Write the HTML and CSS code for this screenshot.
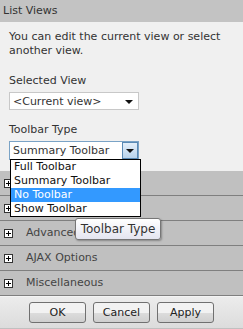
FILE: index.html
```html
<!DOCTYPE html>
<html lang="en">
<head>
    <meta charset="UTF-8">
    <title>List Views</title>
    <link rel="stylesheet" href="styles.css">
</head>
<body>
    <div class="panel">
        <div class="panel-head">List Views</div>
        <div class="panel-body">
            <p class="intro">You can edit the current view or select another view.</p>
            <div class="field-label">Selected View</div>
            <div class="select">
                <span class="select-text">&lt;Current view&gt;</span>
                <span class="arrow"></span>
            </div>
            <div class="field-label">Toolbar Type</div>
            <div class="select open">
                <span class="select-text">Summary Toolbar</span>
                <span class="arrow-btn"><span class="arrow"></span></span>
                <ul class="dropdown">
                    <li>Full Toolbar</li>
                    <li>Summary Toolbar</li>
                    <li class="active">No Toolbar</li>
                    <li>Show Toolbar</li>
                </ul>
            </div>
        </div>
        <div class="sections">
            <div class="section"><span class="plus"></span>Appearance</div>
            <div class="section"><span class="plus"></span>Layout</div>
            <div class="section"><span class="plus"></span>Advanced</div>
            <div class="section"><span class="plus"></span>AJAX Options</div>
            <div class="section"><span class="plus"></span>Miscellaneous</div>
        </div>
        <div class="footer">
            <button type="button">OK</button>
            <button type="button">Cancel</button>
            <button type="button">Apply</button>
        </div>
        <div class="tooltip">Toolbar Type</div>
    </div>
</body>
</html>
```

FILE: styles.css
```css
body {
    margin: 0;
    font-family: 'DejaVu Sans', Verdana, sans-serif;
    font-size: 11px;
    color: #333;
    background-color: #c0c0c0;
}
.panel {
    position: relative;
    width: 243px;
    height: 329px;
    overflow: hidden;
}
.panel-head {
    height: 22px;
    line-height: 21px;
    padding-left: 3px;
    background-color: #c3c3c3;
    color: #333;
}
.panel-body {
    height: 149px;
    box-sizing: border-box;
    padding: 8px 9px 0;
    background-color: #f0f0f0;
}
.intro {
    margin: 0 0 16px;
    line-height: 14px;
    font-size: 11px;
}
.field-label {
    line-height: 14px;
    margin-bottom: 4px;
}
.select {
    position: relative;
    width: 130px;
    height: 18px;
    box-sizing: border-box;
    border: 1px solid #c8c8c8;
    background-color: white;
    margin-bottom: 13px;
    display: flex;
    align-items: center;
    padding-left: 3px;
}
.select-text {
    flex: 1;
    white-space: nowrap;
}
.arrow {
    width: 0;
    height: 0;
    border-left: 4px solid transparent;
    border-right: 4px solid transparent;
    border-top: 4px solid #111;
    margin: 2px 5px 0 0;
}
.select.open {
    height: 19px;
    width: 130px;
    border-color: #7aa3c6;
    padding-right: 0;
}
.arrow-btn {
    width: 16px;
    height: 17px;
    box-sizing: border-box;
    border: 1px solid #5a8ab5;
    background: linear-gradient(#e3effa, #b8d3ec);
    display: flex;
    align-items: center;
    justify-content: center;
}
.arrow-btn .arrow {
    margin: 1px 0 0;
}
.dropdown {
    position: absolute;
    left: 0;
    top: 17px;
    width: 129px;
    margin: 0;
    padding: 0;
    list-style: none;
    background-color: white;
    border: 1px solid #000;
    z-index: 2;
}
.dropdown li {
    height: 14px;
    line-height: 14px;
    padding-left: 3px;
    color: #111;
}
.dropdown li.active {
    background-color: #3399ff;
    color: white;
}
.section {
    height: 24px;
    line-height: 24px;
    border-bottom: 1px solid #7f7f7f;
    background-color: #c0c0c0;
    color: #444;
    display: flex;
    align-items: center;
}
.plus {
    position: relative;
    width: 9px;
    height: 9px;
    box-sizing: border-box;
    border: 1px solid #333;
    background-color: white;
    margin: 0 13px 0 4px;
}
.plus::before,
.plus::after {
    content: '';
    position: absolute;
    background-color: #000;
}
.plus::before {
    left: 1px;
    top: 3px;
    width: 5px;
    height: 1px;
}
.plus::after {
    left: 3px;
    top: 1px;
    width: 1px;
    height: 5px;
}
.footer {
    height: 32px;
    background: linear-gradient(#ececec, #dcdcdc);
    border-top: 1px solid #f4f4f4;
    display: flex;
    justify-content: center;
    gap: 7px;
    padding-top: 5px;
    box-sizing: border-box;
}
button {
    width: 57px;
    height: 21px;
    font-family: 'DejaVu Sans', Verdana, sans-serif;
    font-size: 11px;
    color: #222;
    border: 1px solid #707070;
    border-radius: 3px;
    background: linear-gradient(#f2f2f2 50%, #dddddd 50%, #cfcfcf);
    padding: 0;
}
.tooltip {
    position: absolute;
    left: 75px;
    top: 218px;
    width: 86px;
    height: 22px;
    box-sizing: border-box;
    border: 1px solid #767676;
    border-radius: 3px;
    background: linear-gradient(#ffffff, #e4e5f0);
    font-size: 12px;
    line-height: 20px;
    text-align: center;
    color: #333;
    z-index: 3;
    box-shadow: 1px 1px 2px rgba(0,0,0,0.3);
}
```
